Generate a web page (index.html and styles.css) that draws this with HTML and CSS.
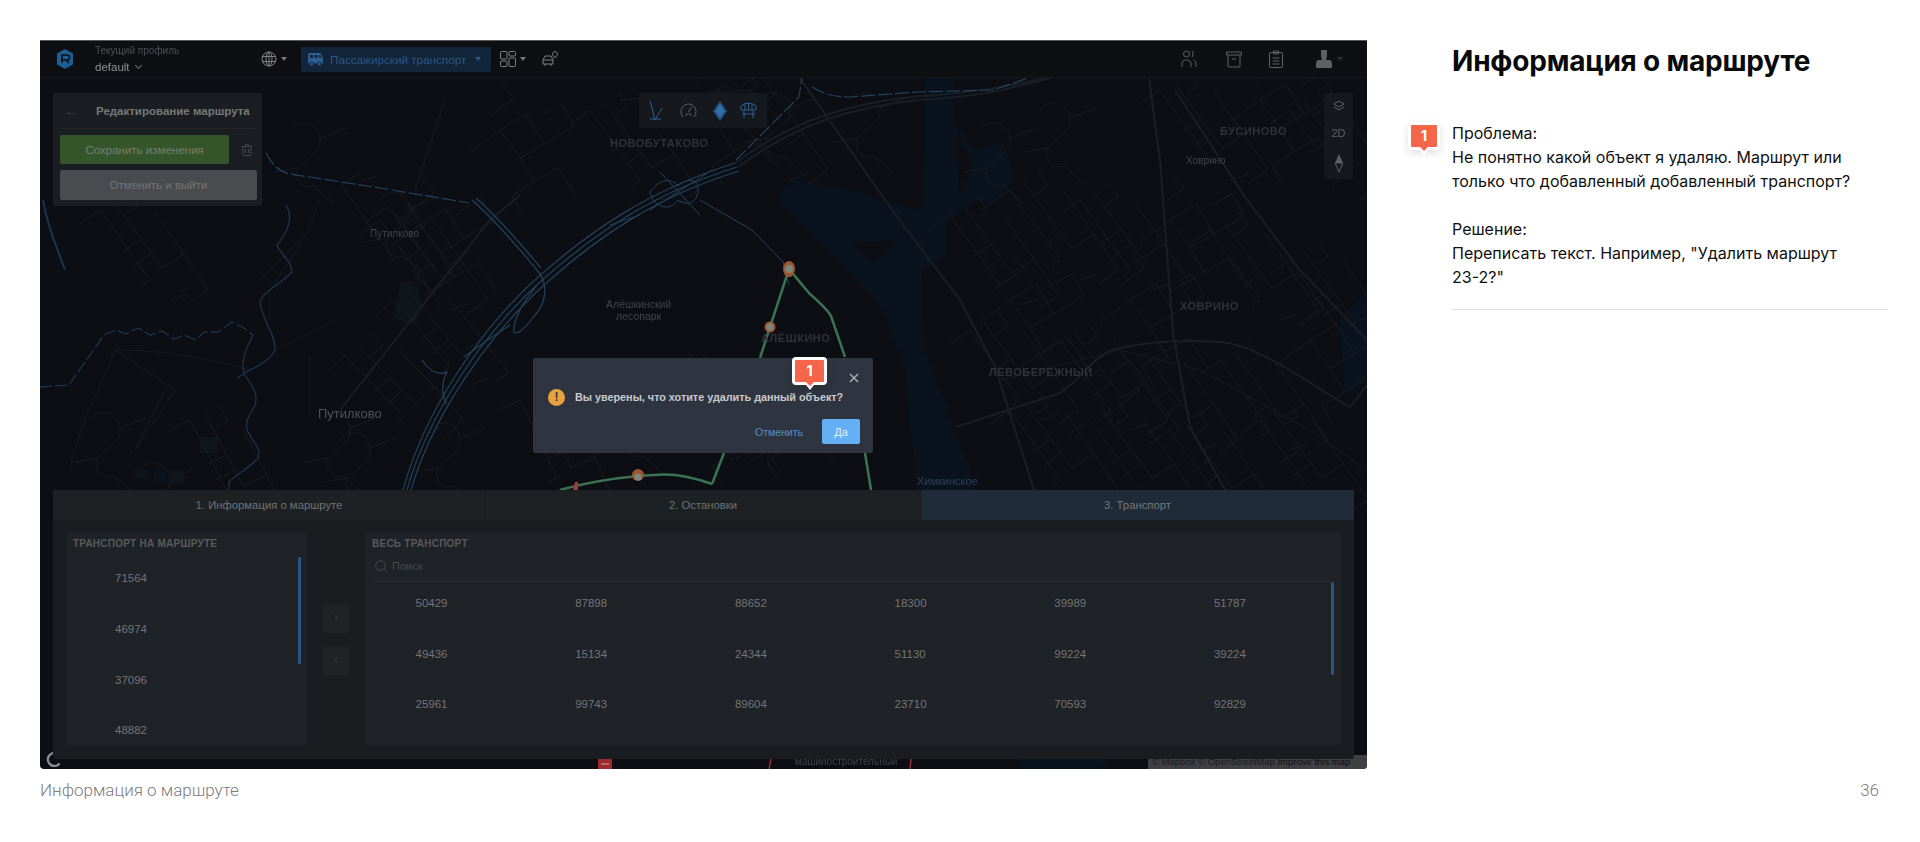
FILE: index.html
```html
<!DOCTYPE html>
<html lang="ru">

<head>
    <meta charset="utf-8">
    <meta name="viewport" content="width=device-width, initial-scale=1.0">
    <title>Информация о маршруте</title>

    <link rel="stylesheet" href="styles.css">
</head>

<body>

    <main class="slide">

        <section class="shot">
            <div class="shot-inner">

                <!-- map: coordinates are slide pixels -->
                <svg class="map" viewBox="40 40 1327 729" aria-hidden="true">
                    <defs>
                        <g id="blok">
                            <path d="M0 0l26 -16l18 30l-24 14zM-30 22l30 -22M20 28l14 24l24 -14M44 14l30 -18l-12 -22l-22 12M-10 -14l24 -18l-12 -14M58 38l20 30M34 52l-22 14l10 18" />
                        </g>
                        <g id="gade">
                            <path d="M0 0l50 70l-8 6M14 -8l48 66M28 -18l10 14l-12 8M62 58l22 -14l-30 -42M-20 14l20 -14M40 30l-18 12M50 44l-16 12M84 44l24 36l-20 14M70 90l18 -6" />
                        </g>
                        <g id="krog">
                            <path d="M0 0c12 -14 28 -6 30 8s-14 20 -22 30c-6 10 4 22 16 18M30 8l26 -10M8 38l-24 4M24 56l20 18" />
                        </g>
                    </defs>

                    <rect x="40" y="40" width="1327" height="729" fill="#0c0e13" />

                    <!-- vand -->
                    <path class="vand" d="M925 78H953L956 125L975 150L1003 142L1016 180L990 205L977 200L947 222L947 255L921 272L925 350L969 467L975 490H917L904 367L882 310L847 270L778 200L790 178L850 190L922 210L925 130Z" />
                    <path class="land" d="M852 243L899 240L873 263ZM958 130L972 165L960 195L958 160Z" />
                    <path class="vand" d="M1017 759H1108L1100 769H1025ZM1340 320L1367 290V380L1345 395ZM135 552l20 -4l5 16l-20 5zM153 470l14 -2v16h-14z" />
                    <path class="soe" d="M400 285q16 -12 20 10t-10 30l-16 -8zM200 437h18v16h-18zM170 470h14v14h-14zM135 470h12v8h-12z" />

                    <!-- mindre veje -->
                    <g class="vej">
                        <use href="#krog" x="290" y="130" />
                        <use href="#krog" x="100" y="110" />
                        <use href="#gade" x="100" y="210" />
                        <use href="#gade" x="380" y="220" />
                        <use href="#krog" x="380" y="200" />
                        <use href="#krog" x="140" y="470" />
                        <use href="#krog" x="90" y="420" />
                        <use href="#gade" x="190" y="420" transform="rotate(8 190 420)" />
                        <use href="#krog" x="320" y="420" />
                        <use href="#gade" x="345" y="355" transform="rotate(-8 345 355)" />
                        <use href="#gade" x="395" y="300" transform="rotate(-4 395 300)" />
                        <use href="#blok" x="420" y="225" />
                        <use href="#gade" x="450" y="265" transform="rotate(180 450 265)" />
                        <use href="#krog" x="340" y="440" />
                        <use href="#krog" x="430" y="430" />
                        <use href="#gade" x="520" y="400" transform="rotate(10 520 400)" />
                        <use href="#blok" x="500" y="130" />
                        <use href="#gade" x="590" y="110" />
                        <use href="#blok" x="700" y="100" />
                        <use href="#krog" x="620" y="400" />
                        <use href="#gade" x="720" y="90" />
                        <use href="#krog" x="760" y="100" />
                        <use href="#krog" x="850" y="100" />
                        <use href="#krog" x="980" y="130" />
                        <use href="#krog" x="1040" y="110" />
                        <use href="#gade" x="1160" y="90" />
                        <use href="#blok" x="1260" y="100" />
                        <use href="#gade" x="1290" y="110" />
                        <use href="#gade" x="950" y="215" />
                        <use href="#gade" x="1010" y="190" />
                        <use href="#gade" x="1080" y="200" />
                        <use href="#blok" x="1170" y="220" />
                        <use href="#gade" x="1210" y="230" />
                        <use href="#gade" x="1290" y="260" />
                        <use href="#blok" x="1010" y="300" />
                        <use href="#gade" x="970" y="330" />
                        <use href="#gade" x="1060" y="340" />
                        <use href="#blok" x="1130" y="300" />
                        <use href="#gade" x="1130" y="360" />
                        <use href="#gade" x="1220" y="360" />
                        <use href="#blok" x="1310" y="340" />
                        <use href="#gade" x="1010" y="410" />
                        <use href="#gade" x="1090" y="420" />
                        <use href="#gade" x="1170" y="430" />
                        <use href="#gade" x="1260" y="420" />
                        <use href="#blok" x="700" y="400" />
                        <use href="#gade" x="660" y="370" />
                        <use href="#blok" x="755" y="395" />
                        <path d="M70 470C80 420 100 390 115 350C170 350 210 360 250 370M115 350l60 40l-40 60l30 -60M320 200c-14 40 -30 60 -50 90M270 290l0 30M275 350l60 -30M300 240l-40 40M310 355v60M415 190l30 -90M620 100l130 -10l30 30M1000 380l120 -30l80 20l110 60l57 40M1100 420l40 -30" />
                    </g>
                    <g class="trunk">
                        <path d="M800 78L892 210L960 300L995 367L1034 490L1045 560" />
                        <path d="M1149 78L1160 160L1173 333L1190 427L1225 490L1250 560" />
                        <path d="M1175 90L1245 197L1300 270L1367 340" />
                        <path d="M956 427L1060 393C1080 380 1090 360 1112 350C1150 340 1190 340 1220 342C1260 345 1310 385 1350 407L1367 385" />
                        <path d="M340 410L490 220L520 195M735 163C780 130 830 105 920 96C970 93 1000 88 1045 78" />
                        <path d="M738 167C783 134 833 109 920 100C970 97 1000 92 1050 78" />
                    </g>

                    <!-- motorveje og floder -->
                    <g class="vand-linje">
                        <path d="M43 200C48 230 58 250 65 270" stroke-width="2" />
                        <path stroke-dasharray="12 3" d="M40 387L69 385L104 335L116 330L126 334L138 328L150 335L162 331L174 339L184 335L196 340L204 332L218 332L232 322L244 328L253 335" />
                        <path d="M253 335C245 350 240 365 245 375C255 390 258 395 255 405C250 415 245 420 247 430C255 445 262 450 258 458C250 468 235 475 229 482V490" />
                        <path d="M286 205C295 220 285 235 277 245C280 255 292 260 292 272C280 285 262 292 260 302C262 320 276 335 275 350C268 365 245 370 238 378" />
                    </g>
                    <g class="motorvej">
                        <path d="M403 490C425 410 480 330 535 280C590 230 650 190 735 163" />
                        <path d="M407 490C429 412 484 333 539 283C594 233 654 193 737 167" />
                        <path d="M411 490C433 415 488 336 543 286C598 236 658 196 739 171" />
                        <path d="M472 200C500 225 520 250 537 270C550 285 545 305 535 315C520 335 510 340 515 322C520 305 530 295 537 285" />
                        <path d="M476 198C504 223 524 248 541 268" />
                        <path d="M422 360C430 372 438 376 447 372C440 385 443 395 446 404" />
                        <path d="M464 357C480 345 495 335 510 325" />
                        <path stroke-dasharray="14 3" d="M266 153C272 165 280 172 290 174L380 188L469 203" />
                        <path stroke-dasharray="14 3" d="M736 160L799 97L802 78" stroke-width="1.200" />
                        <path stroke-dasharray="14 3" d="M812 87C825 95 835 97 850 97L917 92L993 90L1028 78" />
                        <path class="knudepunkt" d="M650 192C660 178 672 178 678 186C688 176 700 180 698 192C696 204 686 206 678 200C670 212 654 208 650 192ZM660 172L700 215M650 210L712 170" />
                        <path d="M783 262L752 230L700 200" stroke-width="1" />
                        <path d="M783 262L789 285" stroke-width="1" />
                        <path d="M610 225L640 215" stroke-width="1" />
                    </g>

                    <!-- rute -->
                    <g class="rute">
                        <path d="M789 269L770 327L760 358M789 269L809 293C820 303 828 310 831 316L845 357M865 453L871 490M724 453L712 484" />
                        <path d="M712 484Q680 472 653 475L638 476Q595 480 560 490" />
                    </g>
                    <ellipse cx="789" cy="269" rx="6" ry="8" fill="#9c5530" />
                    <circle cx="789" cy="269" r="4" fill="#79867d" />
                    <circle cx="770" cy="327" r="5.500" fill="#9c5530" />
                    <circle cx="770" cy="327" r="3.500" fill="#79867d" />
                    <circle cx="638" cy="475" r="6" fill="#9c5530" />
                    <circle cx="638" cy="477" r="3.500" fill="#79867d" />
                    <path d="M573 490l2 -8h3v8z" fill="#a33a34" />
                    <rect x="598" y="758" width="14" height="11" fill="#9c2a2e" />
                    <path d="M601 764h8" stroke="#c9b0b0" stroke-width="1" />
                    <path d="M769 769l2 -10M910 769l1 -10" stroke="#9c2a2e" stroke-width="1.500" />
                </svg>

                <span class="lbl lbl-stor" style="left:570px;top:97px">НОВОБУТАКОВО</span>
                <span class="lbl lbl-stor" style="left:1180px;top:85px">БУСИНОВО</span>
                <span class="lbl" style="left:1146px;top:115px">Ховрино</span>
                <span class="lbl" style="left:330px;top:188px">Путилково</span>
                <span class="lbl lbl-mid" style="left:566px;top:258px">Алёшкинский<br>лесопарк</span>
                <span class="lbl lbl-bred" style="left:278px;top:366px">Путилково</span>
                <span class="lbl lbl-stor" style="left:721px;top:292px">АЛЁШКИНО</span>
                <span class="lbl lbl-stor" style="left:949px;top:326px">ЛЕВОБЕРЕЖНЫЙ</span>
                <span class="lbl lbl-stor" style="left:1140px;top:260px">ХОВРИНО</span>
                <span class="lbl lbl-blaa" style="left:877px;top:435px">Химкинское</span>
                <span class="lbl" style="left:755px;top:716px">машиностроительный</span>

                <!-- topbar -->
                <header class="topbar">
                    <svg class="logo" width="16" height="20" viewBox="0 0 16 20">
                        <path d="M8 0l8 4.500v11l-8 4.500l-8 -4.500v-11z" fill="#1d5d92" />
                        <path d="M5 14v-8h5a2.500 2.500 0 0 1 0 5h-5M9 11l3 3" fill="none" stroke="#0c1016" stroke-width="1.600" />
                    </svg>
                    <div class="profil">
                        <div class="profil-navn">Текущий профиль</div>
                        <div class="profil-valg">default <span class="chev"></span></div>
                    </div>
                    <svg class="ikon" width="16" height="16" viewBox="0 0 16 16">
                        <circle cx="8" cy="8" r="7" />
                        <ellipse cx="8" cy="8" rx="3" ry="7" />
                        <path d="M1 5.500h14M1 10.500h14M8 1v14" />
                    </svg>
                    <span class="caret caret-globe"></span>
                    <div class="transport">
                        <svg width="17" height="15" viewBox="0 0 17 15">
                            <path d="M1 2.500q0 -1.500 1.500 -1.500h10q1.500 0 2 1.500l1.500 5v4h-15z" fill="#2d5f93" />
                            <path d="M3 3h3v3h-3zM7.500 3h3v3h-3zM12 3h1.500l.8 3h-2.300z" fill="#12253a" />
                            <circle cx="4.500" cy="12" r="2" fill="#2d5f93" stroke="#12253a" />
                            <circle cx="12.500" cy="12" r="2" fill="#2d5f93" stroke="#12253a" />
                        </svg>
                        <span>Пассажирский транспорт</span>
                        <span class="caret caret-blaa"></span>
                    </div>
                    <svg class="ikon ikon-grid" width="16" height="16" viewBox="0 0 16 16">
                        <rect x=".5" y=".5" width="6.500" height="7.500" rx="1" />
                        <rect x="9" y=".5" width="6.500" height="4.500" rx="1" />
                        <rect x=".5" y="10" width="6.500" height="5.500" rx="1" />
                        <rect x="9" y="7" width="6.500" height="8.500" rx="1" />
                    </svg>
                    <span class="caret caret-grid"></span>
                    <svg class="ikon ikon-bil" width="17" height="17" viewBox="0 0 17 17">
                        <path d="M1 13v-4l2 -4h6l2 4v4zM1 9h10M3 13v2M9 13v2" />
                        <path d="M13 7q-3 -3 -2.500 -4.500a2.600 2.600 0 0 1 5 0q.5 1.500 -2.500 4.500z" />
                    </svg>

                    <div class="topbar-hoejre">
                        <svg class="ikon ikon-lys" width="16" height="18" viewBox="0 0 16 18">
                            <circle cx="5.500" cy="4" r="3" />
                            <path d="M11 1q2.500 3 0 6M1 17v-3q0 -4 4.500 -4t4.500 4v3M12.500 10q2.500 1 2.500 4v3" />
                        </svg>
                        <svg class="ikon ikon-lys" width="16" height="17" viewBox="0 0 16 17">
                            <path d="M.5 1h15v3h-15zM2 4v11q0 1 1 1h10q1 0 1 -1v-11M6 8h4" />
                        </svg>
                        <svg class="ikon ikon-lys" width="14" height="18" viewBox="0 0 14 18">
                            <rect x=".5" y="2.500" width="13" height="15" rx="1.500" />
                            <path d="M4.500 1h5v3h-5zM3.500 8h7M3.500 11h7M3.500 14h7" />
                        </svg>
                        <svg width="16" height="20" viewBox="0 0 16 20">
                            <path d="M5 1h6v6l-1 4h4q2 1 2 4v3q0 1 -1 1h-14q-1 0 -1 -1v-3q0 -3 2 -4h4l-1 -4z" fill="#5f6063" />
                        </svg>
                        <span class="caret caret-bruger"></span>
                    </div>
                </header>

                <!-- redigering -->
                <aside class="rediger">
                    <div class="rediger-top">
                        <span class="pil">←</span>
                        <strong>Редактирование маршрута</strong>
                    </div>
                    <div class="rediger-gem">
                        <button class="knap knap-groen">Сохранить изменения</button>
                        <svg class="ikon ikon-spand" width="10" height="12" viewBox="0 0 10 12">
                            <path d="M0 2.500h10M3.500 2.500v-2h3v2M1 2.500v8.500q0 .5 .5 .5h7q.5 0 .5 -.5v-8.500M3.500 5v4M6.500 5v4" />
                        </svg>
                    </div>
                    <button class="knap knap-graa">Отменить и выйти</button>
                </aside>

                <!-- kort-værktøj -->
                <div class="kortvaerktoej">
                    <svg class="ikon ikon-blaa" width="16" height="22" viewBox="0 0 16 22">
                        <path d="M2 1l5 19l7 -12M2 19h11" />
                    </svg>
                    <svg class="ikon ikon-lys" width="17" height="15" viewBox="0 0 17 15">
                        <path d="M3 14q-2 -2 -2 -5.500a7.500 7.500 0 0 1 15 0q0 3.500 -2 5.500M8.500 9l3 -5M6 13a2.500 2.500 0 0 1 5 0" />
                    </svg>
                    <svg width="14" height="20" viewBox="0 0 14 20">
                        <path d="M7 0l7 10l-7 10l-7 -10z" fill="#24527f" />
                        <path d="M7 3l4.500 7l-4.500 7l-4.500 -7z" fill="#2f6fab" />
                    </svg>
                    <svg class="ikon ikon-blaa ikon-vej" width="17" height="17" viewBox="0 0 17 17">
                        <path d="M1 4q3.500 -3 7.500 -3t7.500 3v4h-15zM4 8v8M13 8v8M2 12h13M5 2v6M8.500 1v7M12 2v6" />
                    </svg>
                </div>

                <div class="zoomvaerktoej">
                    <svg class="ikon ikon-lys" width="12" height="12" viewBox="0 0 12 12">
                        <path d="M6 1l5 3l-5 3l-5 -3zM1 7l5 3l5 -3" />
                    </svg>
                    <span>2D</span>
                    <svg width="8" height="18" viewBox="0 0 8 18">
                        <path d="M4 0l4 9h-8z" fill="#5d6063" />
                        <path d="M4 18l4 -9h-8z" fill="none" stroke="#5d6063" />
                    </svg>
                </div>

                <div class="mapbox">
                    <svg width="15" height="15" viewBox="0 0 15 15">
                        <path d="M11 1.500a6.500 6.500 0 1 0 2.500 10" fill="none" stroke="#8a8c8f" stroke-width="2.500" />
                    </svg>
                </div>
                <div class="attribution">© Mapbox © OpenStreetMap <b>Improve this map</b></div>

                <!-- panel i bunden -->
                <section class="panel">
                    <nav class="faner">
                        <div class="fane">1. Информация о маршруте</div>
                        <div class="fane">2. Остановки</div>
                        <div class="fane fane-valgt">3. Транспорт</div>
                    </nav>
                    <div class="panel-krop">
                        <div class="kort kort-venstre">
                            <h3>Транспорт на маршруте</h3>
                            <div class="rulle rulle-venstre"></div>
                            <div class="tal-liste">
                                <div>71564</div>
                                <div>46974</div>
                                <div>37096</div>
                                <div>48882</div>
                            </div>
                        </div>
                        <div class="pile">
                            <div class="pil-knap">›</div>
                            <div class="pil-knap">‹</div>
                        </div>
                        <div class="kort kort-hoejre">
                            <h3>Весь транспорт</h3>
                            <div class="soeg">
                                <svg class="ikon ikon-soeg" width="13" height="13" viewBox="0 0 13 13">
                                    <circle cx="5.500" cy="5.500" r="4.800" />
                                    <path d="M9 9l3.500 3.500" />
                                </svg>
                                <span>Поиск</span>
                            </div>
                            <div class="rulle rulle-hoejre"></div>
                            <div class="tal-tabel">
                                <div>50429</div><div>87898</div><div>88652</div><div>18300</div><div>39989</div><div>51787</div>
                                <div>49436</div><div>15134</div><div>24344</div><div>51130</div><div>99224</div><div>39224</div>
                                <div>25961</div><div>99743</div><div>89604</div><div>23710</div><div>70593</div><div>92829</div>
                            </div>
                        </div>
                    </div>
                </section>

                <!-- dialog -->
                <div class="dialog">
                    <span class="luk">
                        <svg width="10" height="10" viewBox="0 0 10 10">
                            <path d="M1 1l8 8M9 1l-8 8" stroke="#b4b7bc" stroke-width="1.200" />
                        </svg>
                    </span>
                    <div class="dialog-tekst">
                        <span class="advarsel">!</span>
                        <span>Вы уверены, что хотите удалить данный объект?</span>
                    </div>
                    <div class="dialog-knapper">
                        <span class="annuller">Отменить</span>
                        <button class="ja">Да</button>
                    </div>
                </div>
            </div>

            <span class="maerke maerke-shot">1</span>
        </section>

        <section class="info">
            <h1>Информация о маршруте</h1>
            <div class="note">
                <span class="maerke">1</span>
                <p>Проблема:<br>Не понятно какой объект я удаляю. Маршрут или только что добавленный добавленный транспорт?<br><br>Решение:<br>Переписать текст. Например, "Удалить маршрут 23-2?"</p>
            </div>
            <hr>
        </section>

    </main>

    <footer class="bund">
        <span>Информация о маршруте</span>
        <span>36</span>
    </footer>

</body>

</html>
```

FILE: styles.css
```css
body {
    box-sizing: border-box;
    background-color: white;
    margin: 0;
    padding: 0;
    overflow: hidden;
}

/*Slide*/

.slide {
    display: flex;
    padding: 40px 32px 0 40px;
}

.shot {
    position: relative;
    flex: none;
    width: 1327px;
    height: 729px;
}

.shot-inner {
    position: relative;
    width: 100%;
    height: 100%;
    overflow: hidden;
    border-radius: 0 0 4px 4px;
    font-family: "Liberation Sans", Arial, sans-serif;
    filter: blur(0.6px);
}

.map {
    display: block;
    width: 100%;
    height: 100%;
}

.vand {
    fill: #0a131d;
}

.land {
    fill: #0c0e13;
}

.soe {
    fill: #10151c;
}

.vej {
    fill: none;
    stroke: #1a1d22;
    stroke-width: 0.9;
}

.trunk {
    fill: none;
    stroke: #1b1e24;
    stroke-width: 2;
}

.vand-linje {
    fill: none;
    stroke: #183551;
    stroke-width: 1.3;
}

.motorvej {
    fill: none;
    stroke: #21435f;
    stroke-width: 1.2;
}

.knudepunkt {
    stroke-width: 1;
}

.rute {
    fill: none;
    stroke: #3b7452;
    stroke-width: 2.5;
}

.lbl {
    position: absolute;
    font-size: 10px;
    line-height: 12px;
    color: #414347;
    white-space: nowrap;
}

.lbl-stor {
    font-size: 11px;
    font-weight: bold;
    letter-spacing: 0.5px;
    color: #303236;
}

.lbl-mid {
    font-size: 10.500px;
    line-height: 12px;
    text-align: center;
}

.lbl-bred {
    font-size: 13px;
    line-height: 15px;
    color: #505256;
}

.lbl-blaa {
    font-size: 11px;
    color: #2c4158;
}

/*Topbar*/

.topbar {
    position: absolute;
    top: 0;
    left: 0;
    right: 0;
    height: 38px;
    display: flex;
    align-items: center;
    background-color: #0d0f13;
    border-bottom: 1px solid #16181d;
    box-sizing: border-box;
    border-top: 1px solid #55575a;
}

.logo {
    flex: none;
    margin-left: 17px;
}

.profil {
    flex: none;
    width: 166px;
    margin-left: 22px;
}

.profil-navn {
    font-size: 10px;
    line-height: 14px;
    color: #4d4f53;
}

.profil-valg {
    font-size: 11.500px;
    line-height: 15px;
    margin-top: 2px;
    color: #8f9194;
}

.chev {
    display: inline-block;
    width: 4px;
    height: 4px;
    margin: 0 0 3px 3px;
    border-right: 1px solid #6b6d70;
    border-bottom: 1px solid #6b6d70;
    transform: rotate(45deg);
}

.ikon {
    flex: none;
    fill: none;
    stroke: #7e8083;
    stroke-width: 1;
}

.ikon-lys {
    stroke: #5f6164;
}

.ikon-blaa {
    stroke: #2d5f93;
}

.caret {
    flex: none;
    width: 0;
    height: 0;
    border-left: 3.500px solid transparent;
    border-right: 3.500px solid transparent;
    border-top: 4px solid #75777a;
}

.caret-globe {
    margin-left: 4px;
}

.transport {
    flex: none;
    display: flex;
    align-items: center;
    box-sizing: border-box;
    width: 190px;
    height: 25px;
    margin-left: 14px;
    padding-left: 6px;
    border-radius: 2px;
    background-color: #12253a;
    font-size: 11.700px;
    color: #2b5889;
}

.transport span:first-of-type {
    margin-left: 6px;
}

.caret-blaa {
    margin-left: 9px;
    border-top-color: #2b5889;
}

.ikon-grid {
    margin-left: 9px;
}

.caret-grid {
    margin-left: 4px;
}

.ikon-bil {
    margin-left: 16px;
}

.topbar-hoejre {
    display: flex;
    align-items: center;
    margin-left: auto;
    padding-right: 24px;
}

.topbar-hoejre svg:nth-child(2) {
    margin-left: 29px;
}

.topbar-hoejre svg:nth-child(3) {
    margin-left: 27px;
}

.topbar-hoejre svg:nth-child(4) {
    margin-left: 33px;
}

.caret-bruger {
    margin-left: 5px;
    border-top-color: #2e2f32;
}

/*Rediger rute*/

.rediger {
    position: absolute;
    left: 13px;
    top: 53px;
    box-sizing: border-box;
    width: 209px;
    height: 113px;
    padding: 0 7px;
    border-radius: 3px;
    background-color: #1a1d21;
}

.rediger-top {
    display: flex;
    align-items: center;
    height: 35px;
    border-bottom: 1px solid #22252a;
    font-size: 11.500px;
    color: #77797c;
}

.rediger-top strong {
    margin-left: 19px;
    white-space: nowrap;
}

.pil {
    margin-left: 5px;
    font-size: 12px;
    color: #45474a;
}

.rediger-gem {
    display: flex;
    align-items: center;
    margin-top: 6px;
    margin-bottom: 6px;
}

.knap {
    display: block;
    border: 0;
    border-radius: 2px;
    font-family: inherit;
    padding: 0;
}

.knap-groen {
    width: 169px;
    height: 29px;
    background-color: #35562a;
    color: #787f72;
    font-size: 11.500px;
}

.ikon-spand {
    margin-left: 13px;
    stroke: #45474a;
}

.knap-graa {
    width: 197px;
    height: 30px;
    background-color: #4a4b4e;
    color: #737477;
    font-size: 11.500px;
}

/*Værktøj på kortet*/

.kortvaerktoej {
    position: absolute;
    left: 599px;
    top: 53px;
    width: 128px;
    height: 35px;
    display: flex;
    align-items: center;
    gap: 16px;
    padding-left: 9px;
    box-sizing: border-box;
    border-radius: 3px;
    background-color: #15181c;
}

.ikon-vej {
    margin-left: -3px;
}

.zoomvaerktoej {
    position: absolute;
    left: 1284px;
    top: 53px;
    width: 29px;
    height: 86px;
    display: flex;
    flex-direction: column;
    align-items: center;
    justify-content: space-around;
    border-radius: 3px;
    background-color: #15181c;
    font-size: 11px;
    color: #606265;
}

.mapbox {
    position: absolute;
    left: 6px;
    bottom: 2px;
    line-height: 0;
}

.attribution {
    position: absolute;
    right: 0;
    bottom: 0;
    box-sizing: border-box;
    width: 219px;
    height: 14px;
    padding-left: 4px;
    background-color: #3f4043;
    font-size: 9.500px;
    line-height: 14px;
    color: #1a1b1d;
    white-space: nowrap;
}

.attribution b {
    font-weight: normal;
    color: #0e0f11;
}

/*Panel*/

.panel {
    position: absolute;
    left: 13px;
    bottom: 10px;
    width: 1301px;
    height: 269px;
    background-color: #1a1d20;
    border-radius: 0 0 3px 3px;
}

.faner {
    display: grid;
    grid-template-columns: 432px 435px 434px;
    height: 30px;
}

.fane {
    display: flex;
    align-items: center;
    justify-content: center;
    background-color: #1e2124;
    font-size: 11.300px;
    color: #6f7174;
}

.fane + .fane {
    border-left: 1px solid #1a1d20;
}

.fane-valgt {
    background-color: #1f2b38;
    color: #75797e;
}

.panel-krop {
    display: flex;
    padding: 12px 13px 13px;
}

.kort {
    position: relative;
    height: 214px;
    box-sizing: border-box;
    padding: 5px 7px 0;
    border-radius: 3px;
    background-color: #1f2226;
}

.kort h3 {
    margin: 0;
    font-size: 10px;
    line-height: 14px;
    letter-spacing: 0.25px;
    text-transform: uppercase;
    color: #585a5d;
}

.kort-venstre {
    flex: none;
    width: 241px;
}

.kort-hoejre {
    flex: 1;
}

.tal-liste {
    display: grid;
    grid-auto-rows: 50.700px;
    margin-top: 2px;
    padding-left: 42px;
    font-size: 11.500px;
    color: #737578;
}

.tal-liste div {
    display: flex;
    align-items: center;
}

.rulle {
    position: absolute;
    width: 3px;
    border-radius: 2px;
    background-color: #2b5582;
}

.rulle-venstre {
    top: 25px;
    right: 6px;
    height: 107px;
}

.rulle-hoejre {
    top: 50px;
    right: 7px;
    height: 93px;
}

.pile {
    flex: none;
    width: 58px;
    display: flex;
    flex-direction: column;
    align-items: center;
    gap: 13px;
    padding-top: 72px;
    box-sizing: border-box;
}

.pil-knap {
    width: 28px;
    height: 29px;
    border-radius: 2px;
    background-color: #202326;
    text-align: center;
    font-size: 12px;
    line-height: 27px;
    color: #36383b;
}

.soeg {
    display: flex;
    align-items: center;
    height: 31px;
    box-sizing: border-box;
    padding-left: 3px;
    border-bottom: 1px solid #26292d;
    font-size: 11px;
    color: #484a4d;
}

.ikon-soeg {
    margin-right: 4px;
    stroke: #484a4d;
}

.tal-tabel {
    display: grid;
    grid-template-columns: repeat(5, 159.700px) 1fr;
    grid-auto-rows: 50.600px;
    margin-left: -7px;
    margin-right: -7px;
    padding-left: 50.500px;
    font-size: 11.500px;
    line-height: 42px;
    color: #737578;
}

/*Dialog*/

.dialog {
    position: absolute;
    left: 493px;
    top: 318px;
    width: 340px;
    height: 95px;
    box-sizing: border-box;
    border-radius: 2px;
    background-color: #2f3540;
}

.luk {
    position: absolute;
    right: 14px;
    top: 15px;
    line-height: 0;
}

.dialog-tekst {
    display: flex;
    align-items: center;
    padding: 30px 0 0 15px;
    font-size: 10.800px;
    font-weight: bold;
    line-height: 18px;
    color: #c7c9cc;
    white-space: nowrap;
}

.advarsel {
    flex: none;
    width: 17px;
    height: 17px;
    margin-right: 10px;
    border-radius: 50%;
    background-color: #e8a13f;
    color: #2f3540;
    text-align: center;
    font-size: 12px;
    line-height: 17px;
}

.dialog-knapper {
    display: flex;
    align-items: center;
    justify-content: flex-end;
    margin-top: 13px;
    padding-right: 13px;
}

.annuller {
    margin-right: 19px;
    font-size: 10.500px;
    color: #4f8fd2;
}

.ja {
    width: 38px;
    height: 25px;
    padding: 0;
    border: 0;
    border-radius: 2px;
    background-color: #64aff6;
    font-family: inherit;
    font-size: 11px;
    color: #e6effa;
}

/*Markering*/

.maerke {
    position: relative;
    display: block;
    flex: none;
    box-sizing: border-box;
    width: 32px;
    height: 28px;
    border: 3px solid white;
    border-radius: 4px;
    background-color: #f4654a;
    font-family: Inter, "Liberation Sans", sans-serif;
    font-size: 15px;
    font-weight: 700;
    line-height: 21px;
    text-align: center;
    color: white;
    box-shadow: 0 3px 10px rgba(0, 0, 0, 0.12);
}

.maerke::after {
    content: "";
    position: absolute;
    left: 50%;
    bottom: -8px;
    margin-left: -4px;
    border-left: 4px solid transparent;
    border-right: 4px solid transparent;
    border-top: 5px solid white;
}

.maerke::before {
    content: "";
    position: absolute;
    z-index: 1;
    left: 50%;
    bottom: -4px;
    margin-left: -4px;
    border-left: 4px solid transparent;
    border-right: 4px solid transparent;
    border-top: 4px solid #f4654a;
}

.maerke-shot {
    position: absolute;
    left: 752px;
    top: 317px;
    width: 35px;
    height: 28px;
}

/*Info*/

.info {
    flex: 1;
    margin-left: 41px;
    padding-top: 3px;
    font-family: Inter, "Liberation Sans", sans-serif;
    color: #111;
}

.info h1 {
    margin: 0 0 42px 44px;
    font-size: 28px;
    font-weight: 700;
    line-height: 36px;
    letter-spacing: -0.2px;
    color: #0a0a0a;
}

.note {
    display: flex;
    gap: 12px;
}

.note .maerke {
    margin-top: 1px;
}

.note p {
    width: 405px;
    margin: 0;
    font-size: 16px;
    line-height: 24px;
}

.info hr {
    height: 1px;
    margin: 20px 0 0 44px;
    border: 0;
    background-color: #dbdfe6;
}

/*Bund*/

.bund {
    display: flex;
    justify-content: space-between;
    margin-top: 9px;
    padding: 0 41px 0 40px;
    font-family: Roboto, "Liberation Sans", sans-serif;
    font-size: 17px;
    font-weight: 300;
    line-height: 24px;
    color: #7c7c7c;
}
```
